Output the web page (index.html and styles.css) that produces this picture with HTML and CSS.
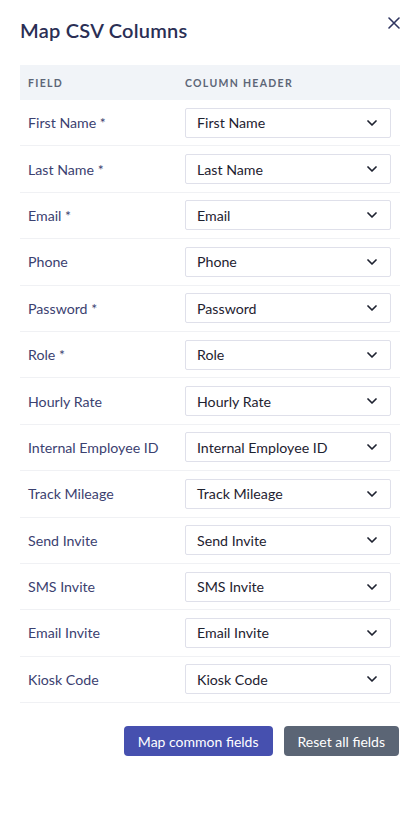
FILE: index.html
```html
<!DOCTYPE html>
<html>
<head>
<meta charset="utf-8">
<link rel="stylesheet" href="styles.css">
</head>
<body>
<div class="modal">
  <div class="modal-head">
    <h1 class="title">Map CSV Columns</h1>
    <button class="close" aria-label="Close">
      <svg width="12" height="12" viewBox="0 0 12 12"><path d="M1 1L11 11M11 1L1 11" stroke="#2f3560" stroke-width="1.6" stroke-linecap="round"/></svg>
    </button>
  </div>
  <div class="table">
    <div class="thead">
      <div class="th th-field">FIELD</div>
      <div class="th">COLUMN HEADER</div>
    </div>
    <div class="row"><div class="label">First Name *</div><div class="select"><span>First Name</span><svg class="chev" width="10" height="6" viewBox="0 0 10 6"><path d="M1 1L5 5L9 1" fill="none" stroke="#1e2230" stroke-width="1.7" stroke-linecap="round" stroke-linejoin="round"/></svg></div></div>
    <div class="row"><div class="label">Last Name *</div><div class="select"><span>Last Name</span><svg class="chev" width="10" height="6" viewBox="0 0 10 6"><path d="M1 1L5 5L9 1" fill="none" stroke="#1e2230" stroke-width="1.7" stroke-linecap="round" stroke-linejoin="round"/></svg></div></div>
    <div class="row"><div class="label">Email *</div><div class="select"><span>Email</span><svg class="chev" width="10" height="6" viewBox="0 0 10 6"><path d="M1 1L5 5L9 1" fill="none" stroke="#1e2230" stroke-width="1.7" stroke-linecap="round" stroke-linejoin="round"/></svg></div></div>
    <div class="row"><div class="label">Phone</div><div class="select"><span>Phone</span><svg class="chev" width="10" height="6" viewBox="0 0 10 6"><path d="M1 1L5 5L9 1" fill="none" stroke="#1e2230" stroke-width="1.7" stroke-linecap="round" stroke-linejoin="round"/></svg></div></div>
    <div class="row"><div class="label">Password *</div><div class="select"><span>Password</span><svg class="chev" width="10" height="6" viewBox="0 0 10 6"><path d="M1 1L5 5L9 1" fill="none" stroke="#1e2230" stroke-width="1.7" stroke-linecap="round" stroke-linejoin="round"/></svg></div></div>
    <div class="row"><div class="label">Role *</div><div class="select"><span>Role</span><svg class="chev" width="10" height="6" viewBox="0 0 10 6"><path d="M1 1L5 5L9 1" fill="none" stroke="#1e2230" stroke-width="1.7" stroke-linecap="round" stroke-linejoin="round"/></svg></div></div>
    <div class="row"><div class="label">Hourly Rate</div><div class="select"><span>Hourly Rate</span><svg class="chev" width="10" height="6" viewBox="0 0 10 6"><path d="M1 1L5 5L9 1" fill="none" stroke="#1e2230" stroke-width="1.7" stroke-linecap="round" stroke-linejoin="round"/></svg></div></div>
    <div class="row"><div class="label">Internal Employee ID</div><div class="select"><span>Internal Employee ID</span><svg class="chev" width="10" height="6" viewBox="0 0 10 6"><path d="M1 1L5 5L9 1" fill="none" stroke="#1e2230" stroke-width="1.7" stroke-linecap="round" stroke-linejoin="round"/></svg></div></div>
    <div class="row"><div class="label">Track Mileage</div><div class="select"><span>Track Mileage</span><svg class="chev" width="10" height="6" viewBox="0 0 10 6"><path d="M1 1L5 5L9 1" fill="none" stroke="#1e2230" stroke-width="1.7" stroke-linecap="round" stroke-linejoin="round"/></svg></div></div>
    <div class="row"><div class="label">Send Invite</div><div class="select"><span>Send Invite</span><svg class="chev" width="10" height="6" viewBox="0 0 10 6"><path d="M1 1L5 5L9 1" fill="none" stroke="#1e2230" stroke-width="1.7" stroke-linecap="round" stroke-linejoin="round"/></svg></div></div>
    <div class="row"><div class="label">SMS Invite</div><div class="select"><span>SMS Invite</span><svg class="chev" width="10" height="6" viewBox="0 0 10 6"><path d="M1 1L5 5L9 1" fill="none" stroke="#1e2230" stroke-width="1.7" stroke-linecap="round" stroke-linejoin="round"/></svg></div></div>
    <div class="row"><div class="label">Email Invite</div><div class="select"><span>Email Invite</span><svg class="chev" width="10" height="6" viewBox="0 0 10 6"><path d="M1 1L5 5L9 1" fill="none" stroke="#1e2230" stroke-width="1.7" stroke-linecap="round" stroke-linejoin="round"/></svg></div></div>
    <div class="row"><div class="label">Kiosk Code</div><div class="select"><span>Kiosk Code</span><svg class="chev" width="10" height="6" viewBox="0 0 10 6"><path d="M1 1L5 5L9 1" fill="none" stroke="#1e2230" stroke-width="1.7" stroke-linecap="round" stroke-linejoin="round"/></svg></div></div>
  </div>
  <div class="actions">
    <button class="btn btn-primary">Map common fields</button>
    <button class="btn btn-secondary">Reset all fields</button>
  </div>
</div>
</body>
</html>
```

FILE: styles.css
```css
* { box-sizing: border-box; }
html, body { margin: 0; padding: 0; background: #fff; }
body { font-family: "Lato", "Noto Sans", sans-serif; color: #1e2230; }
.modal { width: 420px; padding: 0 20px; }
.modal-head { display: flex; justify-content: space-between; align-items: flex-start; height: 65px; }
.title { margin: 18px 0 0 0; font-size: 20px; font-weight: 600; color: #2b2f55; line-height: 24px; letter-spacing: 0.25px; }
.close { background: none; border: 0; padding: 0; margin: 16px -1px 0 0; width: 14px; height: 14px; display: flex; align-items: center; justify-content: center; }
.table { width: 380px; }
.thead { display: grid; grid-template-columns: 165px 1fr; height: 35px; background: #f1f4f8; align-items: center; }
.th { font-size: 10.5px; font-weight: 700; letter-spacing: 1.3px; color: #5d6677; }
.th-field { padding-left: 8px; }
.row { display: grid; grid-template-columns: 165px 206px; height: 46.4px; align-items: center; border-bottom: 1px solid #f0f1f4; }
.label { padding-left: 8px; font-size: 14.2px; color: #3b4170; }
.select { height: 30px; border: 1px solid #dfe0ea; border-radius: 2px; display: flex; align-items: center; justify-content: space-between; padding: 0 13px 0 11px; font-size: 14.2px; color: #1e2230; }
.chev { display: block; }
.actions { display: flex; justify-content: flex-end; gap: 11px; padding: 23px 1px 0 0; }
.btn { font-family: inherit; font-size: 14px; color: #fff; border: 0; border-radius: 4px; height: 30px; padding: 0 14px; }
.btn-primary { background: #4650af; }
.btn-secondary { background: #5b6575; }
```
